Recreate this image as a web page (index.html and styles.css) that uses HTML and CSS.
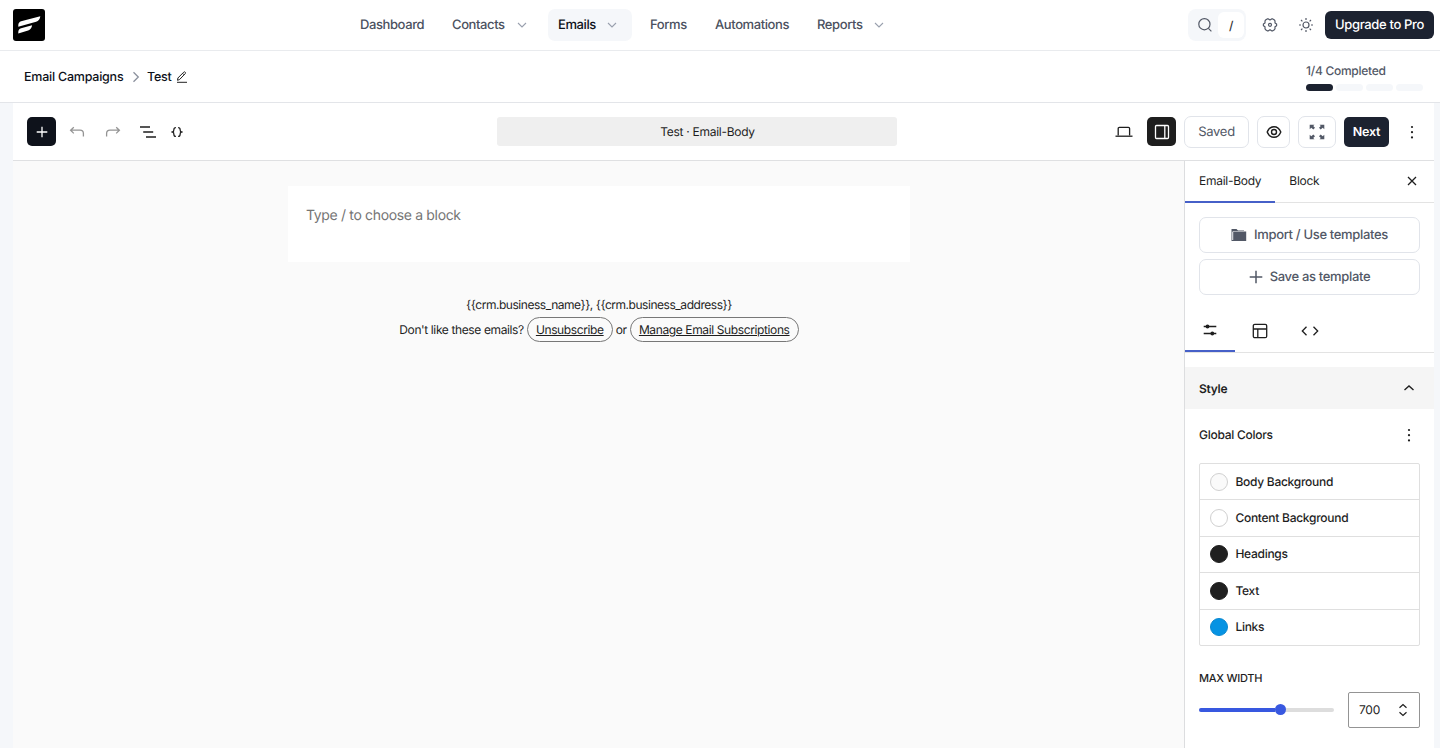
FILE: index.html
```
<!DOCTYPE html>
<html lang="en">
  <head>
    <meta charset="utf-8">
    <title>Test - Email Campaigns</title>
    <link rel="stylesheet" href="styles.css">
  </head>
  <body>
    <header class="topbar">
      <svg class="logo" viewBox="0 0 32 32">
        <rect width="32" height="32" rx="3"/>
        <path fill="#fff" d="M5.300 17.800v-1.700c0-2 1.100-3.400 2.800-3.900L27.300 7.300c-.3 2.700-1.700 4.800-4.200 5.500z"/>
        <path fill="#fff" d="M5.300 24.500v-1.600c0-1.900 1.100-3.200 2.800-3.700l11-2.900c-.3 2.600-1.700 4.500-4 5.200z"/>
      </svg>
      <nav class="menu">
        <a class="menu-item dashboard">Dashboard</a>
        <a class="menu-item contacts">Contacts<svg class="chev" viewBox="0 0 10 6"><path d="M1 1l4 4 4-4"/></svg></a>
        <a class="menu-item emails active">Emails<svg class="chev" viewBox="0 0 10 6"><path d="M1 1l4 4 4-4"/></svg></a>
        <a class="menu-item forms">Forms</a>
        <a class="menu-item automations">Automations</a>
        <a class="menu-item reports">Reports<svg class="chev" viewBox="0 0 10 6"><path d="M1 1l4 4 4-4"/></svg></a>
      </nav>
      <div class="search">
        <svg class="line" width="16" height="16" viewBox="0 0 16 16"><circle cx="7.400" cy="7.200" r="5.600"/><path d="M11.400 11.300l3 3"/></svg>
        <kbd>/</kbd>
      </div>
      <svg class="line gear" width="16" height="16" viewBox="0 0 16 16">
        <path d="M5.200 1.900h1.200L8 3l1.600-1.100h1.200l1.600 1 .6 1.100v1.900l1.600 1v1.800L13 9.800v1.900l-.6 1.100-1.600 1H9.600L8 12.700l-1.600 1.100H5.200l-1.600-1L3 11.700V9.800L1.400 8.700V6.900L3 5.900V4l.6-1.100z"/>
        <circle cx="8" cy="7.800" r="1.500"/>
      </svg>
      <svg class="line sun" width="16" height="16" viewBox="0 0 16 16">
        <circle cx="8" cy="8" r="3"/>
        <path d="M8 1v2M8 13v2M1 8h2M13 8h2M3 3l1.400 1.400M11.600 11.600L13 13M3 13l1.400-1.400M11.600 4.400L13 3"/>
      </svg>
      <a class="upgrade">Upgrade to Pro</a>
    </header>

    <div class="crumbs">
      <span class="crumb-campaigns">Email Campaigns</span>
      <svg class="crumb-sep" width="8" height="12" viewBox="0 0 8 12"><path d="M1.500 1.200L6.300 6l-4.800 4.800"/></svg>
      <span class="crumb-test">Test</span>
      <svg class="pen" width="12" height="12" viewBox="0 0 12 12"><path d="M1.500 9.300l.4-2.300L7.700 1.200c.5-.5 1-.5 1.500 0s.5 1 0 1.500L3.600 8.500zM6.600 2.300l1.500 1.500M1 11.300h10"/></svg>
      <div class="steps">
        <span class="steps-label">1/4 Completed</span>
        <div class="steps-bar"><i class="done"></i><i></i><i></i><i></i></div>
      </div>
    </div>

    <main class="editor">
      <div class="toolbar">
        <div class="tools">
          <a class="add"><svg width="12" height="12" viewBox="0 0 12 12"><path d="M6 .7v10.600M.7 6h10.600"/></svg></a>
          <svg class="undo" width="16" height="12" viewBox="0 0 16 12"><path d="M4.800 1.200L1.600 4.200l3.200 3.200M1.600 4.200H11c2.300 0 3.400 1.200 3.400 3.300v2.900"/></svg>
          <svg class="redo" width="16" height="12" viewBox="0 0 16 12"><path d="M11.200 1.200l3.200 3-3.200 3.200M14.400 4.200H5C2.700 4.200 1.600 5.400 1.600 7.500v2.900"/></svg>
          <svg class="outline" width="18" height="14" viewBox="0 0 18 14"><path d="M1 2h10M4.200 7h10M7 12h10"/></svg>
          <svg class="braces" width="12" height="12" viewBox="0 0 12 12"><path d="M4.900 1.700C3.300 1.700 2.900 2.500 2.900 3.600 2.900 4.900 2.700 5.700 1.600 6c1.100.3 1.300 1.100 1.300 2.400 0 1.100.4 1.900 2 1.900M7.100 1.700c1.600 0 2 .8 2 1.900 0 1.300.2 2.100 1.300 2.400-1.100.3-1.300 1.100-1.300 2.400 0 1.100-.4 1.900-2 1.900"/></svg>
        </div>
        <div class="doc-title">Test · Email-Body</div>
        <div class="actions">
          <svg class="laptop" width="18" height="14" viewBox="0 0 18 14"><path d="M3.200 10.500V3.600c0-.8.4-1.200 1.200-1.200h9c.8 0 1.200.4 1.200 1.200v6.900"/><path d="M.5 11.200h17"/></svg>
          <a class="panel-toggle"><svg width="16" height="16" viewBox="0 0 16 16"><rect x="1.500" y="1.500" width="13" height="13" rx="1"/><path d="M10.800 1.500v13"/></svg></a>
          <a class="btn saved">Saved</a>
          <a class="btn preview"><svg width="16" height="14" viewBox="0 0 16 14"><path d="M1.200 7C2.600 3.500 5 1.700 8 1.700S13.400 3.500 14.800 7C13.400 10.500 11 12.300 8 12.300S2.600 10.500 1.200 7z"/><circle cx="8" cy="7" r="2.500"/></svg></a>
          <a class="btn full"><svg width="16" height="16" viewBox="0 0 16 16"><path d="M.7.7h4.800L4.200 2 6 3.800 4.300 5.600 2.300 3.700.7 5.300zM15.300.7v4.600l-1.600-1.600-2 1.900L10 3.800 11.800 2 10.500.7zM.7 15.300v-4.600l1.600 1.600 2-1.900L6 12.200 4.200 14l1.300 1.300zM15.300 15.300h-4.800l1.300-1.300L10 12.200l1.700-1.800 2 1.900 1.600-1.600z"/></svg></a>
          <a class="next">Next</a>
          <svg class="dots" width="4" height="14" viewBox="0 0 4 14"><circle cx="2" cy="2" r="1.100"/><circle cx="2" cy="7.200" r="1.100"/><circle cx="2" cy="12.400" r="1.100"/></svg>
        </div>
      </div>

      <div class="workspace">
        <section class="canvas">
          <div class="block">Type / to choose a block</div>
          <div class="footer">
            <p class="business">{{crm.business_name}}, {{crm.business_address}}</p>
            <p class="unsub"><span class="ask">Don't like these emails?</span><a class="pill unsubscribe">Unsubscribe</a><span>or</span><a class="pill manage">Manage Email Subscriptions</a></p>
          </div>
        </section>

        <aside class="sidebar">
          <div class="tabs">
            <a class="tab selected">Email-Body</a>
            <a class="tab">Block</a>
            <svg class="close" width="10" height="10" viewBox="0 0 10 10"><path d="M1 1l8 8M9 1L1 9"/></svg>
          </div>
          <div class="templates">
            <a class="template-btn"><svg width="16" height="12" viewBox="0 0 16 12"><path fill="#525866" d="M.5 0h5L7 1.500h6V2H2.200L1.300 3v8H.5zM2.200 2.500h13V12H.5v-1h1.700z"/></svg>Import / Use templates</a>
            <a class="template-btn"><svg class="plus" width="14" height="14" viewBox="0 0 14 14"><path d="M7 .7v12.600M.7 7h12.600"/></svg>Save as template</a>
          </div>
          <div class="icon-tabs">
            <a class="icon-tab selected"><svg width="14" height="12" viewBox="0 0 14 12"><path d="M.7 2.500h12.600M.7 9.500h12.600"/><circle cx="4.500" cy="2.500" r="1.900"/><circle cx="9.300" cy="9.500" r="1.900"/></svg></a>
            <a class="icon-tab"><svg width="16" height="16" viewBox="0 0 16 16"><rect x="1.300" y="1.300" width="13.400" height="13.400" rx="1.500"/><path d="M1.300 6h13.400M5.800 6v8.700"/></svg></a>
            <a class="icon-tab"><svg width="18" height="12" viewBox="0 0 18 12"><path d="M5.500 1.700L1.300 6l4.200 4.300M12.500 1.700L16.700 6l-4.200 4.300"/></svg></a>
          </div>
          <div class="style-head">Style<svg width="12" height="8" viewBox="0 0 12 8"><path d="M1.500 6L6 2l4.500 4"/></svg></div>
          <div class="colors-head">Global Colors<svg class="dots" width="4" height="14" viewBox="0 0 4 14"><circle cx="2" cy="2" r="1.100"/><circle cx="2" cy="7.200" r="1.100"/><circle cx="2" cy="12.400" r="1.100"/></svg></div>
          <ul class="colors">
            <li><i class="swatch body-bg"></i>Body Background</li>
            <li><i class="swatch content-bg"></i>Content Background</li>
            <li><i class="swatch dark"></i>Headings</li>
            <li><i class="swatch dark"></i>Text</li>
            <li><i class="swatch links"></i>Links</li>
          </ul>
          <div class="label">MAX WIDTH</div>
          <div class="range-row">
            <div class="range"><div class="range-fill"></div><div class="thumb"></div></div>
            <div class="number"><span>700</span><svg width="10" height="14" viewBox="0 0 10 14"><path d="M1.500 4.700L5 1.500l3.500 3.200M1.500 9.300L5 12.500l3.500-3.200"/></svg></div>
          </div>
        </aside>
      </div>
    </main>
  </body>
</html>
```
FILE: styles.css
```
*{box-sizing:border-box}
body{margin:0;height:748px;overflow:hidden;background:#f5f7fa;color:#1e1e1e;
     font-family:Inter,"Liberation Sans",sans-serif;font-size:12px;line-height:16px;
     letter-spacing:-.27px;text-rendering:geometricPrecision}
p,ul{margin:0;padding:0;list-style:none}
svg{display:block;flex:none;fill:none}
a,span{white-space:nowrap}

.topbar{display:flex;align-items:center;height:51px;padding:0 6px 1px 13px;background:#fff;border-bottom:1px solid #e9ebee}
.logo{width:32px;height:32px;fill:#000}
.menu{display:flex;gap:8px;margin-left:305px;margin-right:auto}
.menu-item{display:flex;align-items:center;height:32px;padding:1px 10px 0;border-radius:7px;color:#4b5160;font-size:13px;font-weight:500;line-height:17px;letter-spacing:-.4px}
.menu-item.active{background:#f5f7fa;color:#0e121b}
.dashboard{width:84px}
.contacts{width:98px}
.emails{width:84px}
.forms{width:57px}
.automations{width:94px}
.reports{width:90px}
.chev{width:10px;height:6px;margin-left:auto;margin-right:3px;stroke:#99a0ae;stroke-width:1.1}
.emails .chev{margin-right:5px}
.line{stroke:#525866;stroke-width:1.2;stroke-linejoin:round}
.search{display:flex;align-items:center;width:58px;height:32px;padding:2px 2px 2px 9px;border-radius:8px;background:#f5f7fa}
.search kbd{width:26px;height:26px;margin-left:auto;border-radius:6px;background:#fff;color:#333;font:500 12px/27px Inter,sans-serif;text-align:center}
.gear{margin-left:16px}
.sun{margin-left:20px}
.upgrade{width:109px;height:28px;margin-left:11px;border-radius:6px;background:#1c2230;color:#fff;font-size:13px;font-weight:500;line-height:29px;text-align:center;letter-spacing:-.35px}

.crumbs{display:flex;align-items:center;height:52px;padding:0 17px 0 24px;background:#fff;border-bottom:1px solid #e3e5e9;color:#0e121b;font-size:12.5px;font-weight:500}
.crumb-campaigns,.crumb-test{padding-top:2px}
.crumb-campaigns{width:100px;letter-spacing:-.23px}
.crumb-sep{margin:0 7px 0 8px;stroke:#8b919d;stroke-width:1.3}
.crumb-test{width:24px}
.pen{margin-left:5px;stroke:#222;stroke-width:1}
.steps{width:117px;margin-left:auto}
.steps-label{display:block;color:#525866;font-size:12px}
.steps-bar{display:flex;gap:3.5px;margin-top:5px}
.steps-bar i{width:26.7px;height:7px;border-radius:4px;background:#f5f7fa}
.steps-bar .done{background:#1c2230}

.editor{height:645px;margin:0 6px 0 13px;background:#fff}
.toolbar{display:flex;align-items:center;height:58px;padding:0 20px 0 14px;border-bottom:1px solid #dfe0e2}
.tools{display:flex;align-items:center;width:470px}
.tools svg,.laptop{stroke:#1e1e1e;stroke-width:1.3}
.add{display:flex;align-items:center;justify-content:center;width:29px;height:29px;border-radius:5px;background:#0e121b}
.tools .add svg{stroke:#fff}
.tools .undo{margin-left:13px;stroke:#949494}
.tools .redo{margin-left:20px;stroke:#949494}
.outline{margin-left:18px}
.braces{margin-left:14px}
.doc-title{width:400px;height:29px;padding-left:21px;border-radius:3px;background:#efefef;line-height:29px;text-align:center}
.actions{display:flex;align-items:center;margin-left:auto}
.panel-toggle{display:flex;align-items:center;justify-content:center;width:29px;height:29px;margin:0 8px 0 14px;border-radius:5px;background:#1e1e1e}
.panel-toggle svg{stroke:#fff;stroke-width:1.3}
.btn{display:flex;align-items:center;justify-content:center;height:32px;border:1px solid #e1e4ea;border-radius:7px;color:#525866;font-size:13px}
.saved{width:65px}
.preview{width:33px;margin:0 8px}
.preview svg{stroke:#1e1e1e;stroke-width:1.4}
.full{width:38px}
.full svg{fill:#525866}
.next{width:45px;height:30px;margin:0 21px 0 8px;border-radius:5px;background:#1c2230;color:#fff;font-size:12.5px;font-weight:600;line-height:31px;text-align:center}
.dots{fill:#1e1e1e}

.workspace{display:flex;height:587px}
.canvas{flex:1;padding:25px 274px 0 275px;background:#fafafa}
.block{height:76px;padding:19px 18px;background:#fff;color:#757575;font-size:14px;line-height:22px;letter-spacing:-.34px}
.footer{padding-top:35px;text-align:center;letter-spacing:-.38px}
.business{line-height:16px;letter-spacing:-.46px}
.unsub{display:flex;align-items:center;justify-content:center;gap:3px;margin-top:4px}
.pill{height:25px;border:1px solid #777;border-radius:13px;line-height:23px;text-decoration:underline}
.unsubscribe{width:86px}
.manage{width:169px}

.sidebar{width:250px;border-left:1px solid #dcdddf;background:#fff}
.tabs{display:flex;align-items:center;height:42px;border-bottom:1px solid #e3e3e3}
.tab{height:42px;padding:0 14px;line-height:39px}
.tab.selected,.icon-tab.selected{border-bottom:2px solid #4660c8}
.close{margin:0 17px 1px auto;stroke:#1e1e1e;stroke-width:1.3}
.templates{display:grid;gap:6px;padding:14px 14px 0}
.template-btn{display:flex;align-items:center;justify-content:center;gap:7px;height:36px;border:1px solid #e1e4ea;border-radius:7px;color:#525866;font-size:13px;font-weight:500;letter-spacing:-.33px}
.plus{stroke:#525866;stroke-width:1.5}
.icon-tabs{display:flex;height:43px;margin-top:15px;border-bottom:1px solid #e3e3e3}
.icon-tab{display:flex;align-items:center;justify-content:center;width:50px;height:42px;padding-bottom:1px}
.icon-tab svg{stroke:#1e1e1e;stroke-width:1.3}
.icon-tab circle{fill:#1e1e1e;stroke:none}
.style-head{display:flex;align-items:center;justify-content:space-between;height:42px;margin-top:14px;padding:1px 19px 0 14px;background:#f5f5f5;font-weight:600}
.style-head svg{margin-bottom:2px;stroke:#1e1e1e;stroke-width:1.4}
.colors-head{display:flex;align-items:center;justify-content:space-between;padding:18px 23px 0 14px;font-weight:500}
.colors{margin:20px 14px 0;border:1px solid #dfdfdf;border-radius:2px;font-weight:500}
.colors li{display:flex;align-items:center;gap:7px;height:36.4px;padding-left:10.4px;border-top:1px solid #dfdfdf}
.colors li:first-child{height:35.4px;border-top:0}
.swatch{width:18px;height:18px;border:1px solid #d0d0d0;border-radius:50%}
.body-bg{background:#fafafa}
.dark{background:#202020;border-color:#202020}
.links{background:#0693e3;border-color:#0a88d0}
.label{margin:24px 14px 0;font-size:11px;font-weight:500}
.range-row{display:flex;align-items:center;justify-content:space-between;margin:6px 14px 0}
.range{display:flex;align-items:center;width:135px;height:4px;border-radius:2px;background:#ddd}
.range-fill{width:76px;height:4px;border-radius:2px 0 0 2px;background:#3858e0}
.thumb{width:11px;height:11px;border-radius:50%;background:#3858e0}
.number{display:flex;align-items:center;justify-content:space-between;width:72px;height:36px;padding:0 11px 0 10px;border:1px solid #949494;border-radius:2px}
.number svg{stroke:#1e1e1e;stroke-width:1.2}
```
